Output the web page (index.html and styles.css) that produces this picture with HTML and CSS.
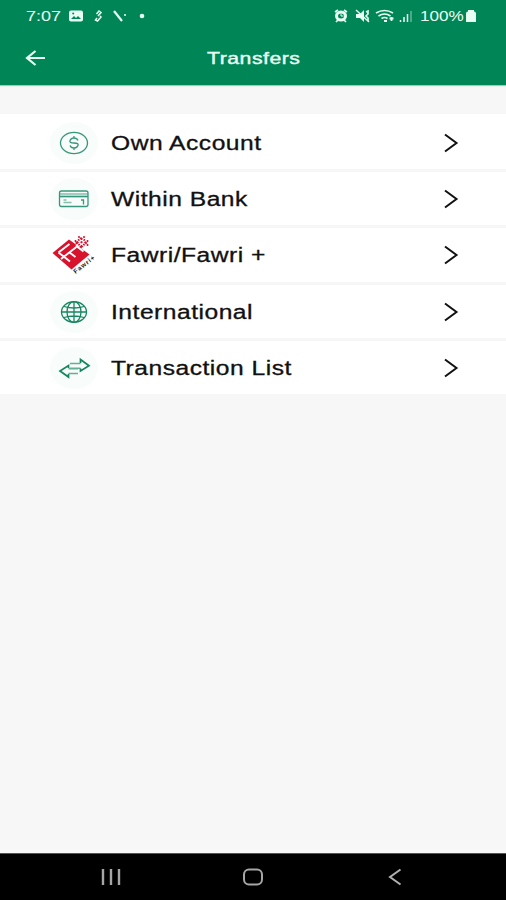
FILE: index.html
```html
<!DOCTYPE html>
<html lang="en">
<head>
<meta charset="utf-8">
<title>Transfers</title>
<link rel="stylesheet" href="styles.css">
</head>
<body>
<header class="header">
  <div class="status">
    <span class="time">7:07</span>
    <svg class="status-left" width="80" height="16" viewBox="0 0 80 16" fill="none" stroke="#e8fff3">
      <rect x="1" y="2.5" width="14" height="11" rx="2" fill="#e8fff3" stroke="none"/>
      <path d="M3 11l3-3 2 2 2-2 3 3z" fill="#008556" stroke="none"/><circle cx="5.2" cy="5.5" r="1" fill="#008556" stroke="none"/>
      <path d="M28.500 6l2.500-3 2 1.500-3 3.500M32 8l1 1-3.500 4-2-1 1.500-2" stroke-width="1.5"/>
      <path d="M46 3l8 10" stroke-width="2.2"/><path d="M56 7h2" stroke-width="1.3"/>
      <circle cx="74" cy="8" r="2.3" fill="#e8fff3" stroke="none"/>
    </svg>
    <svg class="status-right" width="80" height="16" viewBox="0 0 80 16" fill="none" stroke="#e8fff3">
      <ellipse cx="7" cy="8" rx="4.5" ry="4" stroke-width="3"/><path d="M1 4l3-2M13 4l-3-2M2 14l2-2M12 14l-2-2" stroke-width="1.7"/><path d="M7 5.5V8h2.5" stroke-width="1"/>
      <path d="M22 6h4l4-4v12l-4-4h-4z" fill="#e8fff3" stroke="none"/><path d="M22 2l13 12" stroke-width="1.4"/><path d="M32 4l2-1v3l-2 2 2 2v3" stroke-width="1.6"/>
      <path d="M42 5q8.500-5 17 0M44.500 8q6-4 12 0M47.500 10.500q3-2 6 0" stroke-width="1.6"/><path d="M50 13h3M55.500 10.500h4M57.500 9v4" stroke-width="1.800"/>
      <path d="M66.500 14v-2M70 14V9M73.500 14V6" stroke-width="1.5"/><path d="M77 14V3" stroke-width="1.4" opacity=".45"/>
    </svg>
    <span class="percent">100%</span>
    <svg class="battery" width="12" height="14" viewBox="0 0 12 14"><path d="M3 2.500V1h6v1.500q2 0 2 2V13H1V4.500q0-2 2-2z" fill="#e8fff3"/></svg>
  </div>
  <div class="titlebar">
    <svg class="back" width="22" height="18" viewBox="0 0 22 18" fill="none" stroke="#e8fff3" stroke-width="2.200"><path d="M20 9H2M10.500 2L2 9l8.500 7"/></svg>
    <h1 class="title">Transfers</h1>
  </div>
</header>
<main class="list">
  <a class="row">
    <span class="disc"><svg width="48" height="42" viewBox="0 0 48 42" fill="none" stroke="#38977a" stroke-width="1.3"><ellipse cx="24" cy="21" rx="13.500" ry="10.700"/><path d="M28 18.500q-1-2.500-4-2.500t-4 2.500 4 2.500 4 2.500-4 2.500-4-2.500M24 14v2M24 26v2"/></svg></span>
    <span class="label">Own Account</span>
    <svg class="chevron" width="16" height="20" viewBox="0 0 16 20"><path d="M2 1.500L13.500 10 2 18.500"/></svg>
  </a>
  <a class="row">
    <span class="disc"><svg width="48" height="42" viewBox="0 0 48 42" fill="none" stroke="#38977a" stroke-width="1.3"><rect x="9.500" y="13" width="28.500" height="15.500" rx="2"/><path d="M10 18.500h28" stroke-width="1.7"/><path d="M10 16h28M13.500 24.500h8M13.500 22h3" opacity=".6"/><path d="M31 22h2.500v4.500"/></svg></span>
    <span class="label">Within Bank</span>
    <svg class="chevron" width="16" height="20" viewBox="0 0 16 20"><path d="M2 1.500L13.500 10 2 18.500"/></svg>
  </a>
  <a class="row">
    <span class="disc plain"><svg width="48" height="42" viewBox="0 0 48 42" fill="none"><path d="M2.500 19L19 5.500 39.500 20.500 21.500 35.500z" fill="#d7132d"/><path d="M25 9l6-6 6.500 6-6.500 5.500z" fill="#d7132d"/><path d="M11 25L27 12.500M8.500 18.500L20 27.500M8.500 18.500L19.500 10M27 12.500l6.500 5M19.500 18.500l6 4.500" stroke="#fff" stroke-width="1.900"/><path d="M26.500 4l10 9M36.500 4l-10 9" stroke="#fff" stroke-width="3.200"/><path d="M28 5.300l7 6.400M35 5.300l-7 6.400" stroke="#d7132d" stroke-width="1.500" stroke-dasharray="2 1.500"/><path d="M28 3h2M33 3h2M37.500 6v2M37.500 10v2M25.500 6v2" stroke="#d7132d" stroke-width="1.600"/><text class="logo-text" transform="translate(25.500 40) rotate(-38)" textLength="25" lengthAdjust="spacing">Fawri+</text></svg></span>
    <span class="label">Fawri/Fawri +</span>
    <svg class="chevron" width="16" height="20" viewBox="0 0 16 20"><path d="M2 1.500L13.500 10 2 18.500"/></svg>
  </a>
  <a class="row">
    <span class="disc"><svg width="48" height="42" viewBox="0 0 48 42" fill="none" stroke="#168660" stroke-width="1.300"><ellipse cx="24" cy="21" rx="12.500" ry="10.300"/><ellipse cx="24" cy="21" rx="7" ry="10.300"/><path d="M24 10.500v21M12 21h24M14 15.500q10 3 20 0M14 26.500q10-3 20 0"/></svg></span>
    <span class="label">International</span>
    <svg class="chevron" width="16" height="20" viewBox="0 0 16 20"><path d="M2 1.500L13.500 10 2 18.500"/></svg>
  </a>
  <a class="row">
    <span class="disc"><svg width="48" height="42" viewBox="0 0 48 42" fill="none" stroke="#168660" stroke-width="1.700"><path d="M30.500 16v-3.500l8.500 6.200-8.500 5.300v-2.500M18.500 21v-2.500L10 24l8.500 6v-3"/><path d="M20 16.500h10.500M20 21.200h10.500M18.500 21.800H28M18.500 26.500H28" stroke-width="1.500" opacity=".65"/></svg></span>
    <span class="label">Transaction List</span>
    <svg class="chevron" width="16" height="20" viewBox="0 0 16 20"><path d="M2 1.500L13.500 10 2 18.500"/></svg>
  </a>
</main>
<nav class="navbar">
  <svg width="20" height="18" viewBox="0 0 20 18" stroke="#a6a6a6" stroke-width="2.400"><path d="M2 1v16M10 1v16M18 1v16"/></svg>
  <svg class="home" width="22" height="18" viewBox="0 0 22 18" fill="none" stroke="#a6a6a6" stroke-width="2"><rect x="2" y="1.500" width="18" height="15" rx="5"/></svg>
  <svg width="14" height="18" viewBox="0 0 14 18" fill="none" stroke="#b0b0b0" stroke-width="2"><path d="M12.500 1.500L2 9l10.500 7.500"/></svg>
</nav>
</body>
</html>
```
FILE: styles.css
```css
* { box-sizing: border-box; }
body {
  margin: 0;
  height: 900px;
  display: flex;
  flex-direction: column;
  background: #f7f7f7;
  font-family: "Liberation Sans", Arial, sans-serif;
  overflow: hidden;
}
svg { display: block; flex: none; }
.header {
  height: 85px;
  flex: none;
  background: #008556;
  color: #e8fff3;
  box-shadow: 0 1px 1px #9ccdb9;
}
.status {
  height: 31px;
  display: flex;
  align-items: center;
  padding-left: 26px;
}
.time, .percent {
  font-size: 15px;
  line-height: 16px;
  transform: scaleX(1.2);
  transform-origin: left;
  white-space: nowrap;
}
.time { width: 42px; }
.percent {
  width: 45px;
  margin-left: 6px;
  transform: scaleX(1.14);
}
.status-right { margin-left: 186px; }
.titlebar {
  height: 56px;
  display: grid;
  grid-template-columns: 182px 1fr;
  align-items: center;
  padding-left: 25px;
}
.back { margin-bottom: 2px; }
.title {
  justify-self: start;
  margin: 0;
  font-size: 17px;
  line-height: 20px;
  font-weight: 400;
  letter-spacing: 0.4px;
  -webkit-text-stroke: 0.4px #e8fff3;
  transform: scaleX(1.25);
  transform-origin: left;
}
.list {
  margin-top: 29px;
  flex: 1;
  display: flex;
  flex-direction: column;
  gap: 3px;
}
.row {
  height: 53.25px;
  display: flex;
  align-items: center;
  padding: 1px 47px 0 50px;
  background: #fff;
  box-shadow: 0 0 1px #f3f3f3;
}
.row:first-child { height: 55px; padding-top: 2px; }
.disc {
  width: 48px;
  height: 42px;
  border-radius: 50%;
  background: #f8fcfb;
}
.plain { background: none; }
.logo-text {
  fill: #222;
  font-size: 6.5px;
  font-weight: 700;
}
.label {
  margin-left: 13px;
  font-size: 19.5px;
  line-height: 24px;
  letter-spacing: 0.4px;
  color: #111;
  -webkit-text-stroke: 0.3px #111;
  transform: scaleX(1.262);
  transform-origin: left;
  white-space: nowrap;
}
.chevron {
  margin-left: auto;
  fill: none;
  stroke: #111;
  stroke-width: 2;
}
.navbar {
  height: 47px;
  flex: none;
  display: flex;
  justify-content: space-between;
  align-items: center;
  padding: 0 104px 0 101px;
  background: #000;
  border-top: 1px solid #555;
}
.home { margin-right: 4px; }
```
